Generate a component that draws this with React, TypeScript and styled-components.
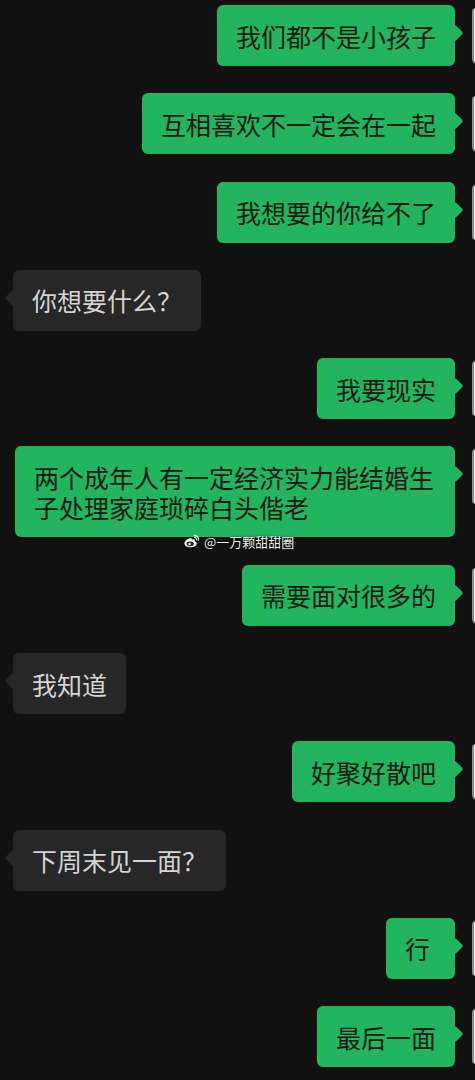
import { createGlobalStyle, styled } from 'styled-components';

const GlobalStyle = createGlobalStyle`
  html, body {
    margin: 0;
    padding: 0;
    background: #111111;
    overflow: hidden;
  }
  body {
    font-family: 'Noto Sans CJK SC', 'Noto Sans', sans-serif;
  }
`;

type Side = 'left' | 'right';

const Page = styled.div`
  width: 475px;
  height: 1080px;
  overflow: hidden;
  display: flex;
  flex-direction: column;
  gap: 27.3px;
  padding-top: 5px;
  box-sizing: border-box;
`;

const Row = styled.div<{ $side: Side }>`
  position: relative;
  display: flex;
  align-items: flex-start;
  justify-content: ${(p) => (p.$side === 'right' ? 'flex-end' : 'flex-start')};
  padding-left: ${(p) => (p.$side === 'left' ? '13px' : '0')};
`;

const Bubble = styled.div<{ $side: Side }>`
  position: relative;
  min-width: 69px;
  max-width: 440px;
  box-sizing: border-box;
  padding: 15.5px 19px;
  border-radius: 6px;
  font-size: 25px;
  line-height: 30px;
  background: ${(p) => (p.$side === 'right' ? '#22b45f' : '#272727')};
  color: ${(p) => (p.$side === 'right' ? '#0c1a10' : '#d4d4d4')};
  word-break: break-all;

  &::before {
    content: '';
    position: absolute;
    top: 22px;
    width: 12px;
    height: 12px;
    border-radius: 2px;
    background: inherit;
    transform: rotate(45deg);
    ${(p) => (p.$side === 'right' ? 'right: -6px;' : 'left: -6px;')}
  }
`;

const Avatar = styled.div`
  flex-shrink: 0;
  width: 55px;
  height: 55px;
  margin-top: 3px;
  margin-left: 17px;
  margin-right: -52px;
  border-radius: 4px;
  box-sizing: border-box;
  background: #ececec;
  border-left: 2px solid #8d8d8d;
`;

const Watermark = styled.div`
  position: absolute;
  left: 183px;
  top: 86px;
  display: flex;
  align-items: center;
  gap: 4px;
  font-size: 13px;
  color: #ececec;
  text-shadow: 0 0 2px rgba(0, 0, 0, 0.8);
  white-space: nowrap;
`;

const WeiboIcon = () => (
  <svg width="17" height="15" viewBox="0 0 17 15">
    <path
      d="M7 4.2c-3 .6-5.6 3-5.6 5.2 0 2.3 2.8 3.9 6.1 3.9 3.5 0 6.2-1.8 6.2-3.9 0-1.4-1.3-2-2.1-2.2.4-.9.3-1.7-.6-1.9-.9-.2-2.3.4-2.3.4s.3-1-.3-1.5C7.9 3.8 7.4 4.1 7 4.2z"
      fill="#f4f4f4"
    />
    <ellipse cx="7.2" cy="9.8" rx="3.6" ry="2.4" fill="#222" />
    <circle cx="6.6" cy="10" r="1.2" fill="#f4f4f4" />
    <path d="M11.5 1.5a4 4 0 0 1 4 4.5" stroke="#f4f4f4" strokeWidth="1.3" fill="none" strokeLinecap="round" />
    <path d="M11.6 3.5a2 2 0 0 1 2 2.4" stroke="#f4f4f4" strokeWidth="1.1" fill="none" strokeLinecap="round" />
  </svg>
);

interface Message {
  side: Side;
  text: string;
  mark?: boolean;
}

const messages: Message[] = [
  { side: 'right', text: '我们都不是小孩子' },
  { side: 'right', text: '互相喜欢不一定会在一起' },
  { side: 'right', text: '我想要的你给不了' },
  { side: 'left', text: '你想要什么？' },
  { side: 'right', text: '我要现实' },
  { side: 'right', text: '两个成年人有一定经济实力能结婚生子处理家庭琐碎白头偕老', mark: true },
  { side: 'right', text: '需要面对很多的' },
  { side: 'left', text: '我知道' },
  { side: 'right', text: '好聚好散吧' },
  { side: 'left', text: '下周末见一面？' },
  { side: 'right', text: '行' },
  { side: 'right', text: '最后一面' },
];

export default function App() {
  return (
    <>
      <GlobalStyle />
      <Page>
        {messages.map((m, i) => (
          <Row key={i} $side={m.side}>
            <Bubble $side={m.side}>{m.text}</Bubble>
            {m.side === 'right' && <Avatar />}
            {m.mark && (
              <Watermark>
                <WeiboIcon />
                <span>@一万颗甜甜圈</span>
              </Watermark>
            )}
          </Row>
        ))}
      </Page>
    </>
  );
}
